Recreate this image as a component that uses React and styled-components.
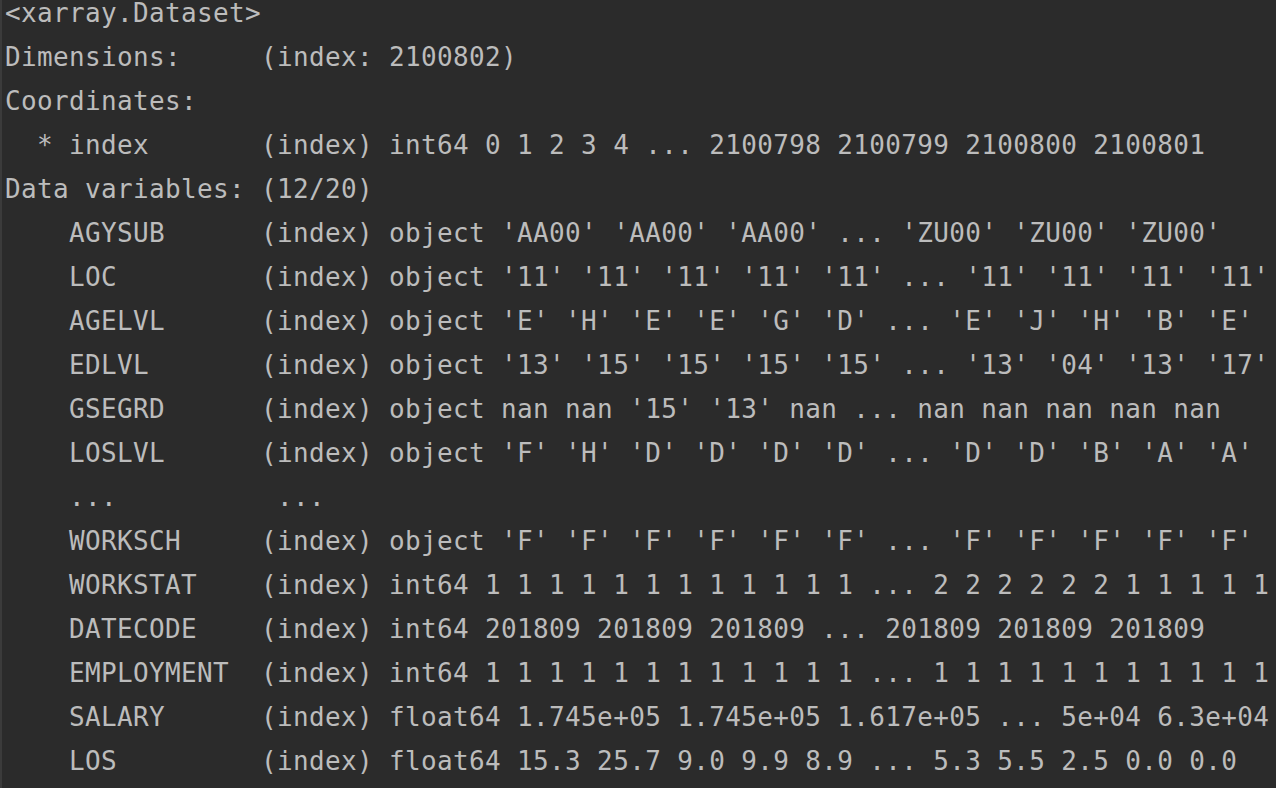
import React from "react"
import styled, { createGlobalStyle } from "styled-components"

const GlobalStyle = createGlobalStyle`
  html, body {
    margin: 0;
    padding: 0;
    background: #2b2b2b;
    overflow: hidden;
  }
`

const Console = styled.div`
  width: 1276px;
  height: 788px;
  box-sizing: border-box;
  background: #2b2b2b;
  border-left: 2px solid #3b3b3b;
  padding-left: 3px;
  overflow: hidden;
  font-family: "DejaVu Sans Mono", "Liberation Mono", monospace;
  font-size: 26px;
  letter-spacing: 0.35px;
  color: #bcbcbc;
`

// the repr header sits tight against the top edge of the panel
const Header = styled.div`
  white-space: pre;
  line-height: 26px;
  margin-bottom: 9px;
`

const Line = styled.div`
  white-space: pre;
  line-height: 44px;
  height: 44px;
`

const lines = [
  "Dimensions:     (index: 2100802)",
  "Coordinates:",
  "  * index       (index) int64 0 1 2 3 4 ... 2100798 2100799 2100800 2100801",
  "Data variables: (12/20)",
  "    AGYSUB      (index) object 'AA00' 'AA00' 'AA00' ... 'ZU00' 'ZU00' 'ZU00'",
  "    LOC         (index) object '11' '11' '11' '11' '11' ... '11' '11' '11' '11'",
  "    AGELVL      (index) object 'E' 'H' 'E' 'E' 'G' 'D' ... 'E' 'J' 'H' 'B' 'E'",
  "    EDLVL       (index) object '13' '15' '15' '15' '15' ... '13' '04' '13' '17'",
  "    GSEGRD      (index) object nan nan '15' '13' nan ... nan nan nan nan nan",
  "    LOSLVL      (index) object 'F' 'H' 'D' 'D' 'D' 'D' ... 'D' 'D' 'B' 'A' 'A'",
  "    ...          ...",
  "    WORKSCH     (index) object 'F' 'F' 'F' 'F' 'F' 'F' ... 'F' 'F' 'F' 'F' 'F'",
  "    WORKSTAT    (index) int64 1 1 1 1 1 1 1 1 1 1 1 1 ... 2 2 2 2 2 2 1 1 1 1 1",
  "    DATECODE    (index) int64 201809 201809 201809 ... 201809 201809 201809",
  "    EMPLOYMENT  (index) int64 1 1 1 1 1 1 1 1 1 1 1 1 ... 1 1 1 1 1 1 1 1 1 1 1",
  "    SALARY      (index) float64 1.745e+05 1.745e+05 1.617e+05 ... 5e+04 6.3e+04",
  "    LOS         (index) float64 15.3 25.7 9.0 9.9 8.9 ... 5.3 5.5 2.5 0.0 0.0",
]

const App = () => {
  return (
    <>
      <GlobalStyle />
      <Console>
        <Header>{"<xarray.Dataset>"}</Header>
        {lines.map((text, i) => (
          <Line key={i}>{text}</Line>
        ))}
      </Console>
    </>
  )
}

export default App
